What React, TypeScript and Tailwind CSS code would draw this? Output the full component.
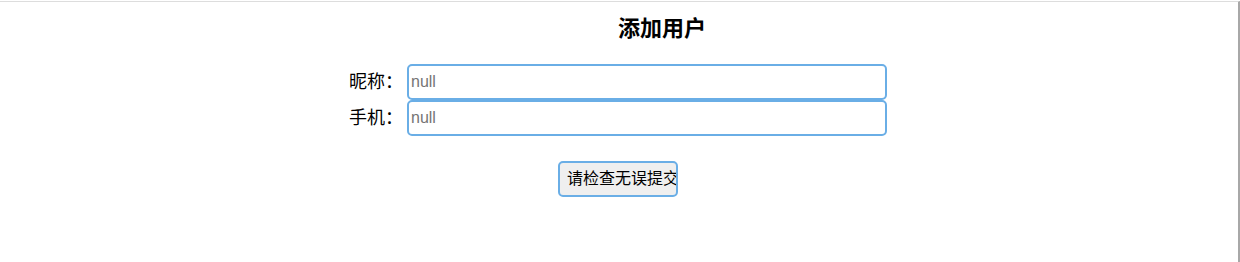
import React from 'react';

const font = { fontFamily: '"Liberation Sans", "Noto Sans CJK SC", sans-serif' };

export default function App() {
  return (
    <div className="w-[1240px] h-[262px] bg-white pt-px" style={font}>
      <div className="w-[1240px] h-[261px] border-t border-[#dddddd] border-r-2 border-r-[#a8a8a8]">
        {/* Title */}
        <div className="flex justify-center pt-[13px]">
          <h3 className="ml-[86px] text-[22px] font-bold leading-[28px] text-black">添加用户</h3>
        </div>

        {/* Form rows */}
        <div className="flex flex-col items-center mt-[21px] pr-[2px]">
          <div className="flex items-center">
            <label className="text-[18px] text-black mr-[4px] leading-[36px]">昵称：</label>
            <input
              placeholder="null"
              className="w-[480px] h-[36px] border-2 border-[#6aaee6] rounded-[5px] px-[2px] text-[16px] text-black placeholder-[#757575] outline-none"
            />
          </div>
          <div className="flex items-center">
            <label className="text-[18px] text-black mr-[4px] leading-[36px]">手机：</label>
            <input
              placeholder="null"
              className="w-[480px] h-[36px] border-2 border-[#6aaee6] rounded-[5px] px-[2px] text-[16px] text-black placeholder-[#757575] outline-none"
            />
          </div>
        </div>

        {/* Submit */}
        <div className="flex justify-center mt-[25px] pr-[2px]">
          <button className="w-[120px] h-[36px] border-2 border-[#6aaee6] rounded-[5px] bg-[#efefef] pl-[7px] text-left text-[16px] text-black whitespace-nowrap overflow-hidden">
            请检查无误提交
          </button>
        </div>
      </div>
    </div>
  );
}
